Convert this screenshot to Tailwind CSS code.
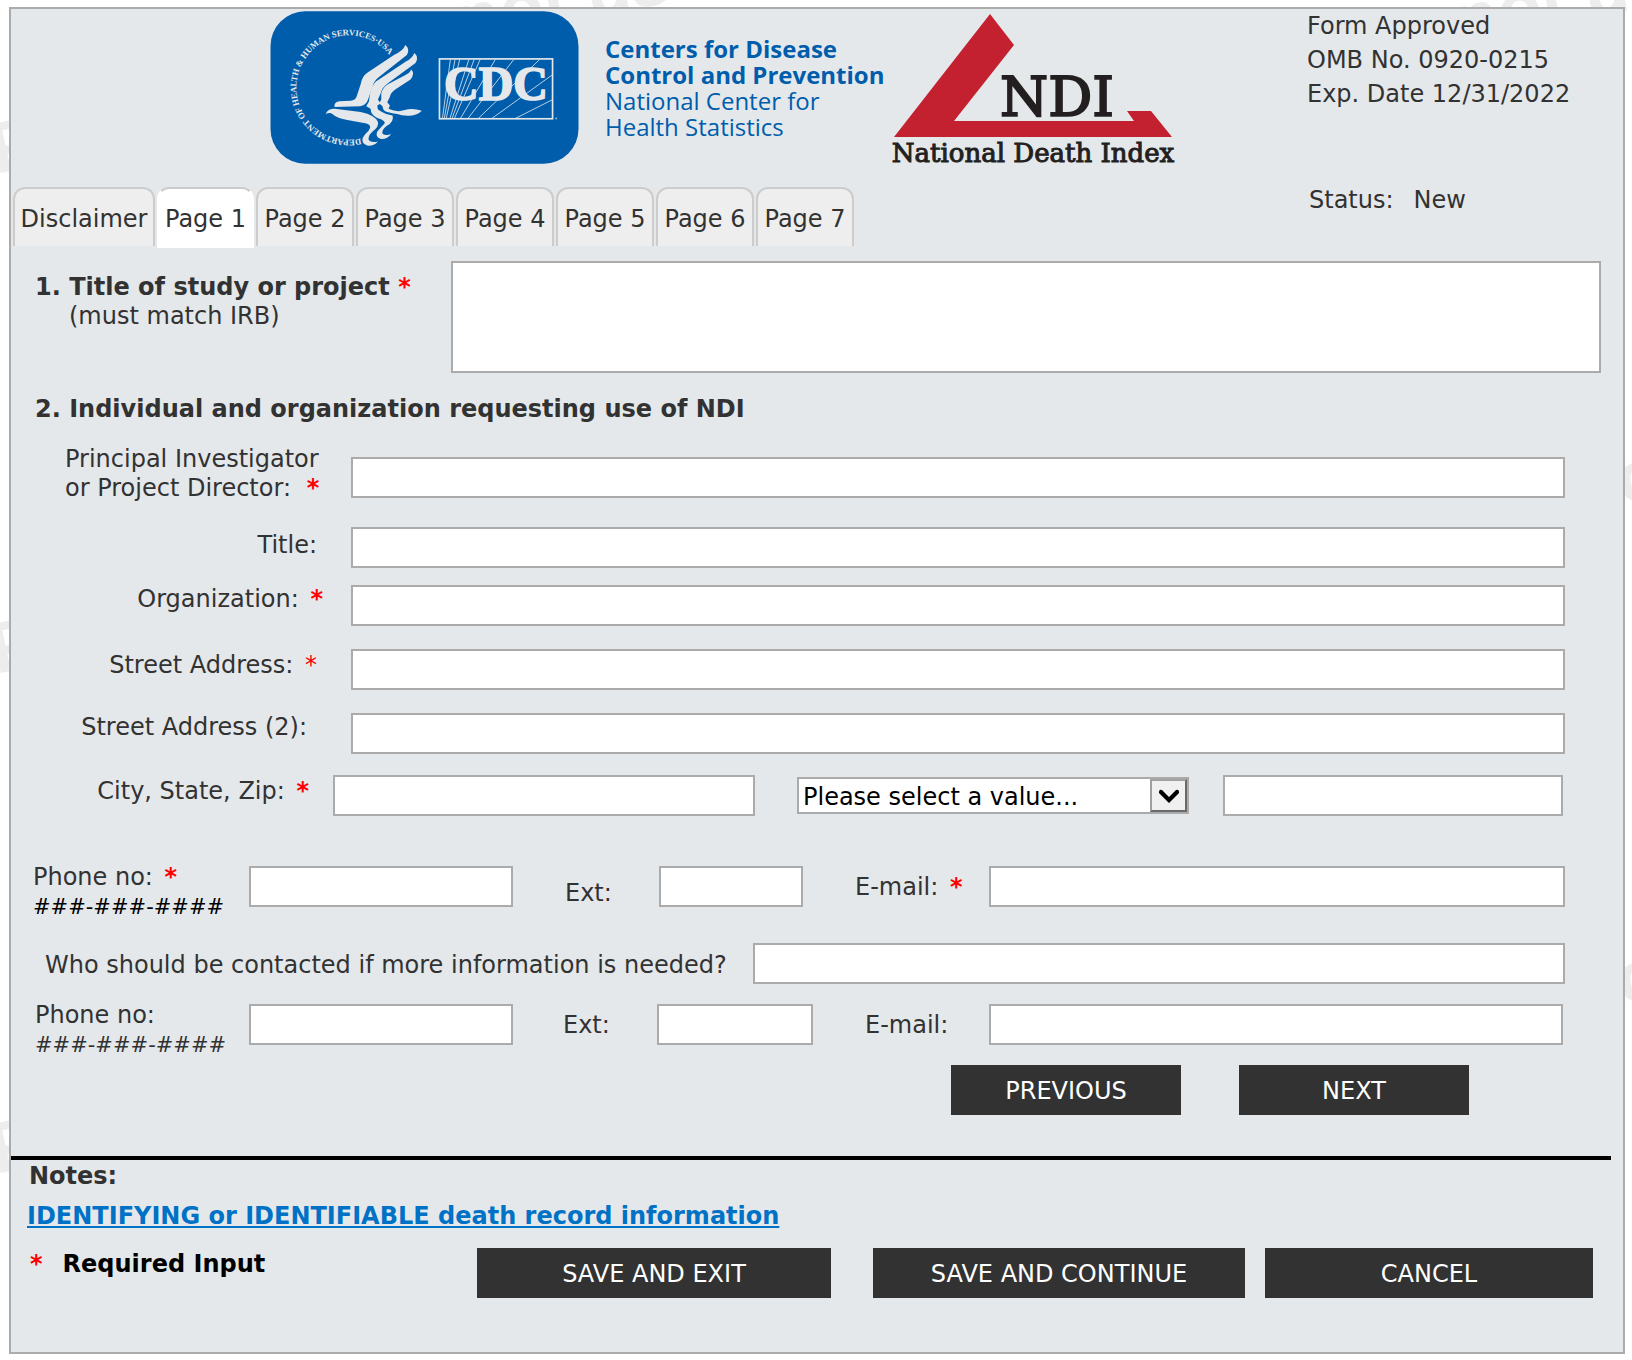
<!DOCTYPE html>
<html lang="en">
<head>
    <meta charset="UTF-8">
    <meta name="viewport" content="width=device-width, initial-scale=1.0">
    <title>National Death Index Application</title>
    <script src="https://cdn.jsdelivr.net/npm/@tailwindcss/browser@4"></script>
</head>
<body class="relative overflow-x-hidden bg-white font-['DejaVu_Sans',sans-serif] text-2xl leading-[29px] text-[#323232]">
    <!-- Watermark behind the form -->
    <svg class="absolute inset-0 -z-10 h-full w-full" aria-hidden="true" fill="#ededed" font-family="Liberation Sans" font-weight="bold" font-size="72">
        <text transform="translate(462 46) rotate(-12)">not use</text>
        <text transform="translate(1460 46) rotate(-12)">not use</text>
        <text transform="translate(-4 174) rotate(-12)">P</text>
        <text transform="translate(-4 674) rotate(-12)">P</text>
        <text transform="translate(-4 1174) rotate(-12)">P</text>
        <text transform="translate(1622 505) rotate(-12)">o</text>
        <text transform="translate(1622 1005) rotate(-12)">o</text>
    </svg>

    <div class="mt-[7px] mr-[7px] mb-[7px] ml-[9px] border-2 border-[#ababab] bg-[#e4e8eb]">
        <!-- Header -->
        <header class="flex items-start pl-[259px]">
            <svg class="mt-[2px] h-[153px] w-[309px] shrink-0" viewBox="28 18 928 460" role="img" aria-label="HHS and CDC logos">
                <defs>
                    <path id="sealArc" d="M300 401A157 157 0 1 1 412 196"/>
                    <clipPath id="rayBox"><rect x="539" y="164" width="336" height="177"/></clipPath>
                </defs>
                <rect x="29" y="19" width="926" height="458" rx="104" fill="#005dab"/>
                <g fill="#e4e8eb">
                    <text font-family="Liberation Serif" font-weight="bold" font-size="26"><textPath href="#sealArc">DEPARTMENT OF HEALTH &amp; HUMAN SERVICES·USA</textPath></text>
                    <path d="M434 120Q450 132 439 150L356 216Q340 228 336 245L322 285Q316 303 298 304L222 307Q218 292 236 289L270 288Q284 286 288 275L300 238Q304 215 320 204L400 150Q430 136 434 120Z"/>
                    <path d="M461 144Q477 156 465 174L384 234Q364 248 360 266L352 284L360 296L350 302L352 314Q376 330 396 332Q402 350 378 364Q362 376 366 388Q378 394 392 388Q380 404 362 403Q342 398 350 380Q362 366 372 356Q376 348 350 340Q330 330 330 312L317 304L325 290L328 268Q332 244 346 230L436 170Q458 158 461 144Z"/>
                    <path d="M452 194Q464 206 450 224L404 254Q390 264 388 276L380 292L388 302L384 312Q410 324 432 316Q456 308 484 318Q470 332 448 333Q424 334 410 328Q396 326 380 322Q366 318 366 304L356 296L362 284L362 266Q366 248 382 238L432 212Q449 204 452 194Z"/>
                    <path d="M195 328Q200 312 222 312L300 322Q345 332 352 352Q356 366 336 380Q318 396 326 408Q338 415 352 410Q340 424 322 423Q302 418 306 400Q312 388 324 378Q336 362 318 356L260 346Q230 342 215 328Q208 322 195 328Z"/>
                </g>
                <g clip-path="url(#rayBox)" stroke="#b9cfe3" stroke-width="3">
                    <path d="M530 460L570 162M530 460L598 162M530 460L626 162M530 460L660 162M530 460L706 162M530 460L762 162M530 460L840 162M530 460L876 210M530 460L876 285M530 460L584 162M530 460L642 162"/>
                </g>
                <rect x="537" y="162" width="340" height="180" fill="none" stroke="#e4e8eb" stroke-width="5"/>
                <text x="551" y="287" font-family="Liberation Serif" font-weight="bold" font-size="144" fill="#e4e8eb" stroke="#e4e8eb" stroke-width="5">CDC</text>
                <circle cx="888" cy="341" r="3" fill="#8fb4d6"/>
            </svg>
            <div class="mt-[27px] ml-[26px] w-[284px] shrink-0 font-['Open_Sans',sans-serif] text-2xl leading-[26px] whitespace-nowrap text-[#005dab]">
                <p class="font-bold">Centers for Disease</p>
                <p class="font-bold">Control and Prevention</p>
                <p>National Center for</p>
                <p>Health Statistics</p>
            </div>
            <svg class="h-[160px] w-[292px] shrink-0" viewBox="889 9 292 160" role="img" aria-label="NDI National Death Index">
                <path fill="#c32030" d="M990 14L1014 45L954 121H1134L1127 111H1151L1172 137H894Z"/>
                <g fill="#231f20" text-anchor="middle">
                    <text x="1057" y="116" font-family="DejaVu Serif" font-size="55" stroke="#231f20" stroke-width="2">NDI</text>
                    <text x="1033" y="162" font-family="DejaVu Serif" font-size="26" stroke="#231f20" stroke-width="1">National Death Index</text>
                </g>
            </svg>
            <div class="ml-auto w-[316px] shrink-0 leading-[34px]">
                <p>Form Approved</p>
                <p>OMB No. 0920-0215</p>
                <p>Exp. Date 12/31/2022</p>
            </div>
        </header>

        <!-- Tabs -->
        <div class="mt-[18px] flex items-start pl-[2px]">
            <nav class="flex items-start gap-[2px]">
                <button type="button" class="h-[59px] w-[142px] rounded-t-xl border-2 border-b-0 border-[#ccc] bg-[#eee] pt-1">Disclaimer</button>
                <button type="button" class="h-[61px] w-[97px] rounded-t-xl border-2 border-b-0 border-t-[#ccc] border-x-white bg-white pt-[2px]">Page 1</button>
                <button type="button" class="h-[59px] w-[98px] rounded-t-xl border-2 border-b-0 border-[#ccc] bg-[#eee] pt-1">Page 2</button>
                <button type="button" class="h-[59px] w-[98px] rounded-t-xl border-2 border-b-0 border-[#ccc] bg-[#eee] pt-1">Page 3</button>
                <button type="button" class="h-[59px] w-[98px] rounded-t-xl border-2 border-b-0 border-[#ccc] bg-[#eee] pt-1">Page 4</button>
                <button type="button" class="h-[59px] w-[98px] rounded-t-xl border-2 border-b-0 border-[#ccc] bg-[#eee] pt-1">Page 5</button>
                <button type="button" class="h-[59px] w-[98px] rounded-t-xl border-2 border-b-0 border-[#ccc] bg-[#eee] pt-1">Page 6</button>
                <button type="button" class="h-[59px] w-[98px] rounded-t-xl border-2 border-b-0 border-[#ccc] bg-[#eee] pt-1">Page 7</button>
            </nav>
            <p class="ml-auto flex w-[314px] gap-5 leading-[26px]"><span>Status:</span><span>New</span></p>
        </div>

        <form>
            <!-- 1. Study title -->
            <div class="mt-[13px] flex items-start pr-[22px] pl-[24px]">
                <label for="study" class="mt-3 w-[416px] shrink-0">
                    <b>1. Title of study or project <span class="text-[#f00]">*</span></b><br>
                    <span class="pl-[34px]">(must match IRB)</span>
                </label>
                <textarea id="study" class="h-[112px] flex-1 resize-none border-2 border-[#ababab] bg-white"></textarea>
            </div>

            <!-- 2. Requester -->
            <h2 class="mt-[22px] pl-[24px] font-bold">2. Individual and organization requesting use of NDI</h2>
            <div class="mt-[21px] flex items-start pr-[58px]">
                <label for="pi" class="w-[340px] shrink-0 pl-[54px]">Principal Investigator<br>or Project Director: <b class="ml-2 text-[#f00]">*</b></label>
                <input id="pi" type="text" class="mt-[12px] h-[41px] min-w-0 flex-1 border-2 border-[#ababab] bg-white px-1">
            </div>
            <div class="mt-[24px] flex items-start pr-[58px]">
                <label for="title" class="w-[340px] shrink-0 pt-1 pr-[34px] text-right">Title:</label>
                <input id="title" type="text" class="h-[41px] min-w-0 flex-1 border-2 border-[#ababab] bg-white px-1">
            </div>
            <div class="mt-[17px] flex items-start pr-[58px]">
                <label for="org" class="w-[340px] shrink-0 pr-7 text-right">Organization: <b class="ml-1 text-[#f00]">*</b></label>
                <input id="org" type="text" class="h-[41px] min-w-0 flex-1 border-2 border-[#ababab] bg-white px-1">
            </div>
            <div class="mt-[23px] flex items-start pr-[58px]">
                <label for="street" class="w-[340px] shrink-0 pt-[2px] pr-[34px] text-right">Street Address: <span class="ml-1 text-[#f00]">*</span></label>
                <input id="street" type="text" class="h-[41px] min-w-0 flex-1 border-2 border-[#ababab] bg-white px-1">
            </div>
            <div class="mt-[23px] flex items-start pr-[58px]">
                <label for="street2" class="w-[340px] shrink-0 pr-11 text-right">Street Address (2):</label>
                <input id="street2" type="text" class="h-[41px] min-w-0 flex-1 border-2 border-[#ababab] bg-white px-1">
            </div>
            <div class="mt-[21px] flex items-start pr-[60px]">
                <label for="city" class="w-[322px] shrink-0 pt-[2px] pr-6 text-right">City, State, Zip: <b class="ml-1 text-[#f00]">*</b></label>
                <input id="city" type="text" class="h-[41px] min-w-0 grow-[410] basis-0 border-2 border-[#ababab] bg-white px-1">
                <div class="relative mt-[2px] ml-[42px] h-[37px] min-w-0 grow-[392] basis-0">
                    <select aria-label="State" class="h-full w-full appearance-none border-2 border-[#ababab] bg-white pt-1 pl-1 leading-[29px] text-black">
                        <option>Please select a value...</option>
                    </select>
                    <span class="pointer-events-none absolute top-[2px] right-[2px] flex h-[33px] w-[37px] items-center justify-center border-2 border-t-[#a0a0a0] border-r-[#696969] border-b-[#696969] border-l-[#a0a0a0] bg-[#f0f0f0]">
                        <svg class="h-[14px] w-[20px]" viewBox="0 0 20 14" fill="#000"><path d="M0 3Q0 0 3 1L10 8L17 1Q20 0 20 3V4L10 14L0 4Z"/></svg>
                    </span>
                </div>
                <input type="text" aria-label="Zip" class="ml-[34px] h-[41px] min-w-0 grow-[328] basis-0 border-2 border-[#ababab] bg-white px-1">
            </div>

            <!-- Requester contact -->
            <div class="mt-[47px] flex items-start pr-[58px] pl-[22px]">
                <label for="phone" class="w-[216px] shrink-0 whitespace-nowrap">Phone no: <b class="ml-1 text-[#f00]">*</b><br><span class="text-[21px] text-black">###-###-####</span></label>
                <input id="phone" type="tel" class="mt-[3px] h-[41px] w-[264px] border-2 border-[#ababab] bg-white px-1">
                <label for="ext" class="mt-4 ml-[52px] w-[94px] shrink-0">Ext:</label>
                <input id="ext" type="text" class="mt-[3px] h-[41px] w-[144px] border-2 border-[#ababab] bg-white px-1">
                <label for="email" class="mt-[10px] ml-[52px] w-[134px] shrink-0">E-mail: <b class="ml-1 text-[#f00]">*</b></label>
                <input id="email" type="email" class="mt-[3px] h-[41px] min-w-0 flex-1 border-2 border-[#ababab] bg-white px-1">
            </div>

            <!-- Alternate contact -->
            <div class="mt-[21px] flex items-center pr-[58px] pl-[34px]">
                <label for="contact" class="w-[708px] shrink-0 pt-1">Who should be contacted if more information is needed?</label>
                <input id="contact" type="text" class="h-[41px] min-w-0 flex-1 border-2 border-[#ababab] bg-white px-1">
            </div>
            <div class="mt-[17px] flex items-start pr-[60px] pl-[24px]">
                <label for="phone2" class="w-[214px] shrink-0 whitespace-nowrap">Phone no:<br><span class="text-[21px]">###-###-####</span></label>
                <input id="phone2" type="tel" class="mt-[3px] h-[41px] w-[264px] border-2 border-[#ababab] bg-white px-1">
                <label for="ext2" class="mt-[10px] ml-[50px] w-[94px] shrink-0">Ext:</label>
                <input id="ext2" type="text" class="mt-[3px] h-[41px] w-[156px] border-2 border-[#ababab] bg-white px-1">
                <label for="email2" class="mt-[10px] ml-[52px] w-[124px] shrink-0">E-mail:</label>
                <input id="email2" type="email" class="mt-[3px] h-[41px] min-w-0 flex-1 border-2 border-[#ababab] bg-white px-1">
            </div>
            <div class="mt-[5px] flex justify-end gap-[58px] pr-[154px]">
                <button type="button" class="h-[50px] w-[230px] bg-[#323232] pt-[2px] text-white">PREVIOUS</button>
                <button type="button" class="h-[50px] w-[230px] bg-[#323232] pt-[2px] text-white">NEXT</button>
            </div>

            <!-- Notes -->
            <hr class="mt-[41px] mr-3 border-t-4 border-black">
            <div class="pt-[2px] pr-[30px] pb-[54px] pl-[16px]">
                <p class="pl-[2px] font-bold">Notes:</p>
                <a href="#" class="mt-[11px] inline-block font-bold text-[#0072c6] underline decoration-2 underline-offset-2">IDENTIFYING or IDENTIFIABLE death record information</a>
                <div class="mt-[17px] flex items-start">
                    <p class="w-[450px] shrink-0 pt-[2px] pl-[3px] font-bold text-black"><span class="pr-5 text-[#f00]">*</span>Required Input</p>
                    <button type="button" class="h-[50px] grow-[354] basis-0 bg-[#323232] pt-[2px] text-white">SAVE AND EXIT</button>
                    <button type="button" class="ml-[42px] h-[50px] grow-[372] basis-0 bg-[#323232] pt-[2px] text-white">SAVE AND CONTINUE</button>
                    <button type="button" class="ml-5 h-[50px] grow-[328] basis-0 bg-[#323232] pt-[2px] text-white">CANCEL</button>
                </div>
            </div>
        </form>
    </div>
</body>
</html>
